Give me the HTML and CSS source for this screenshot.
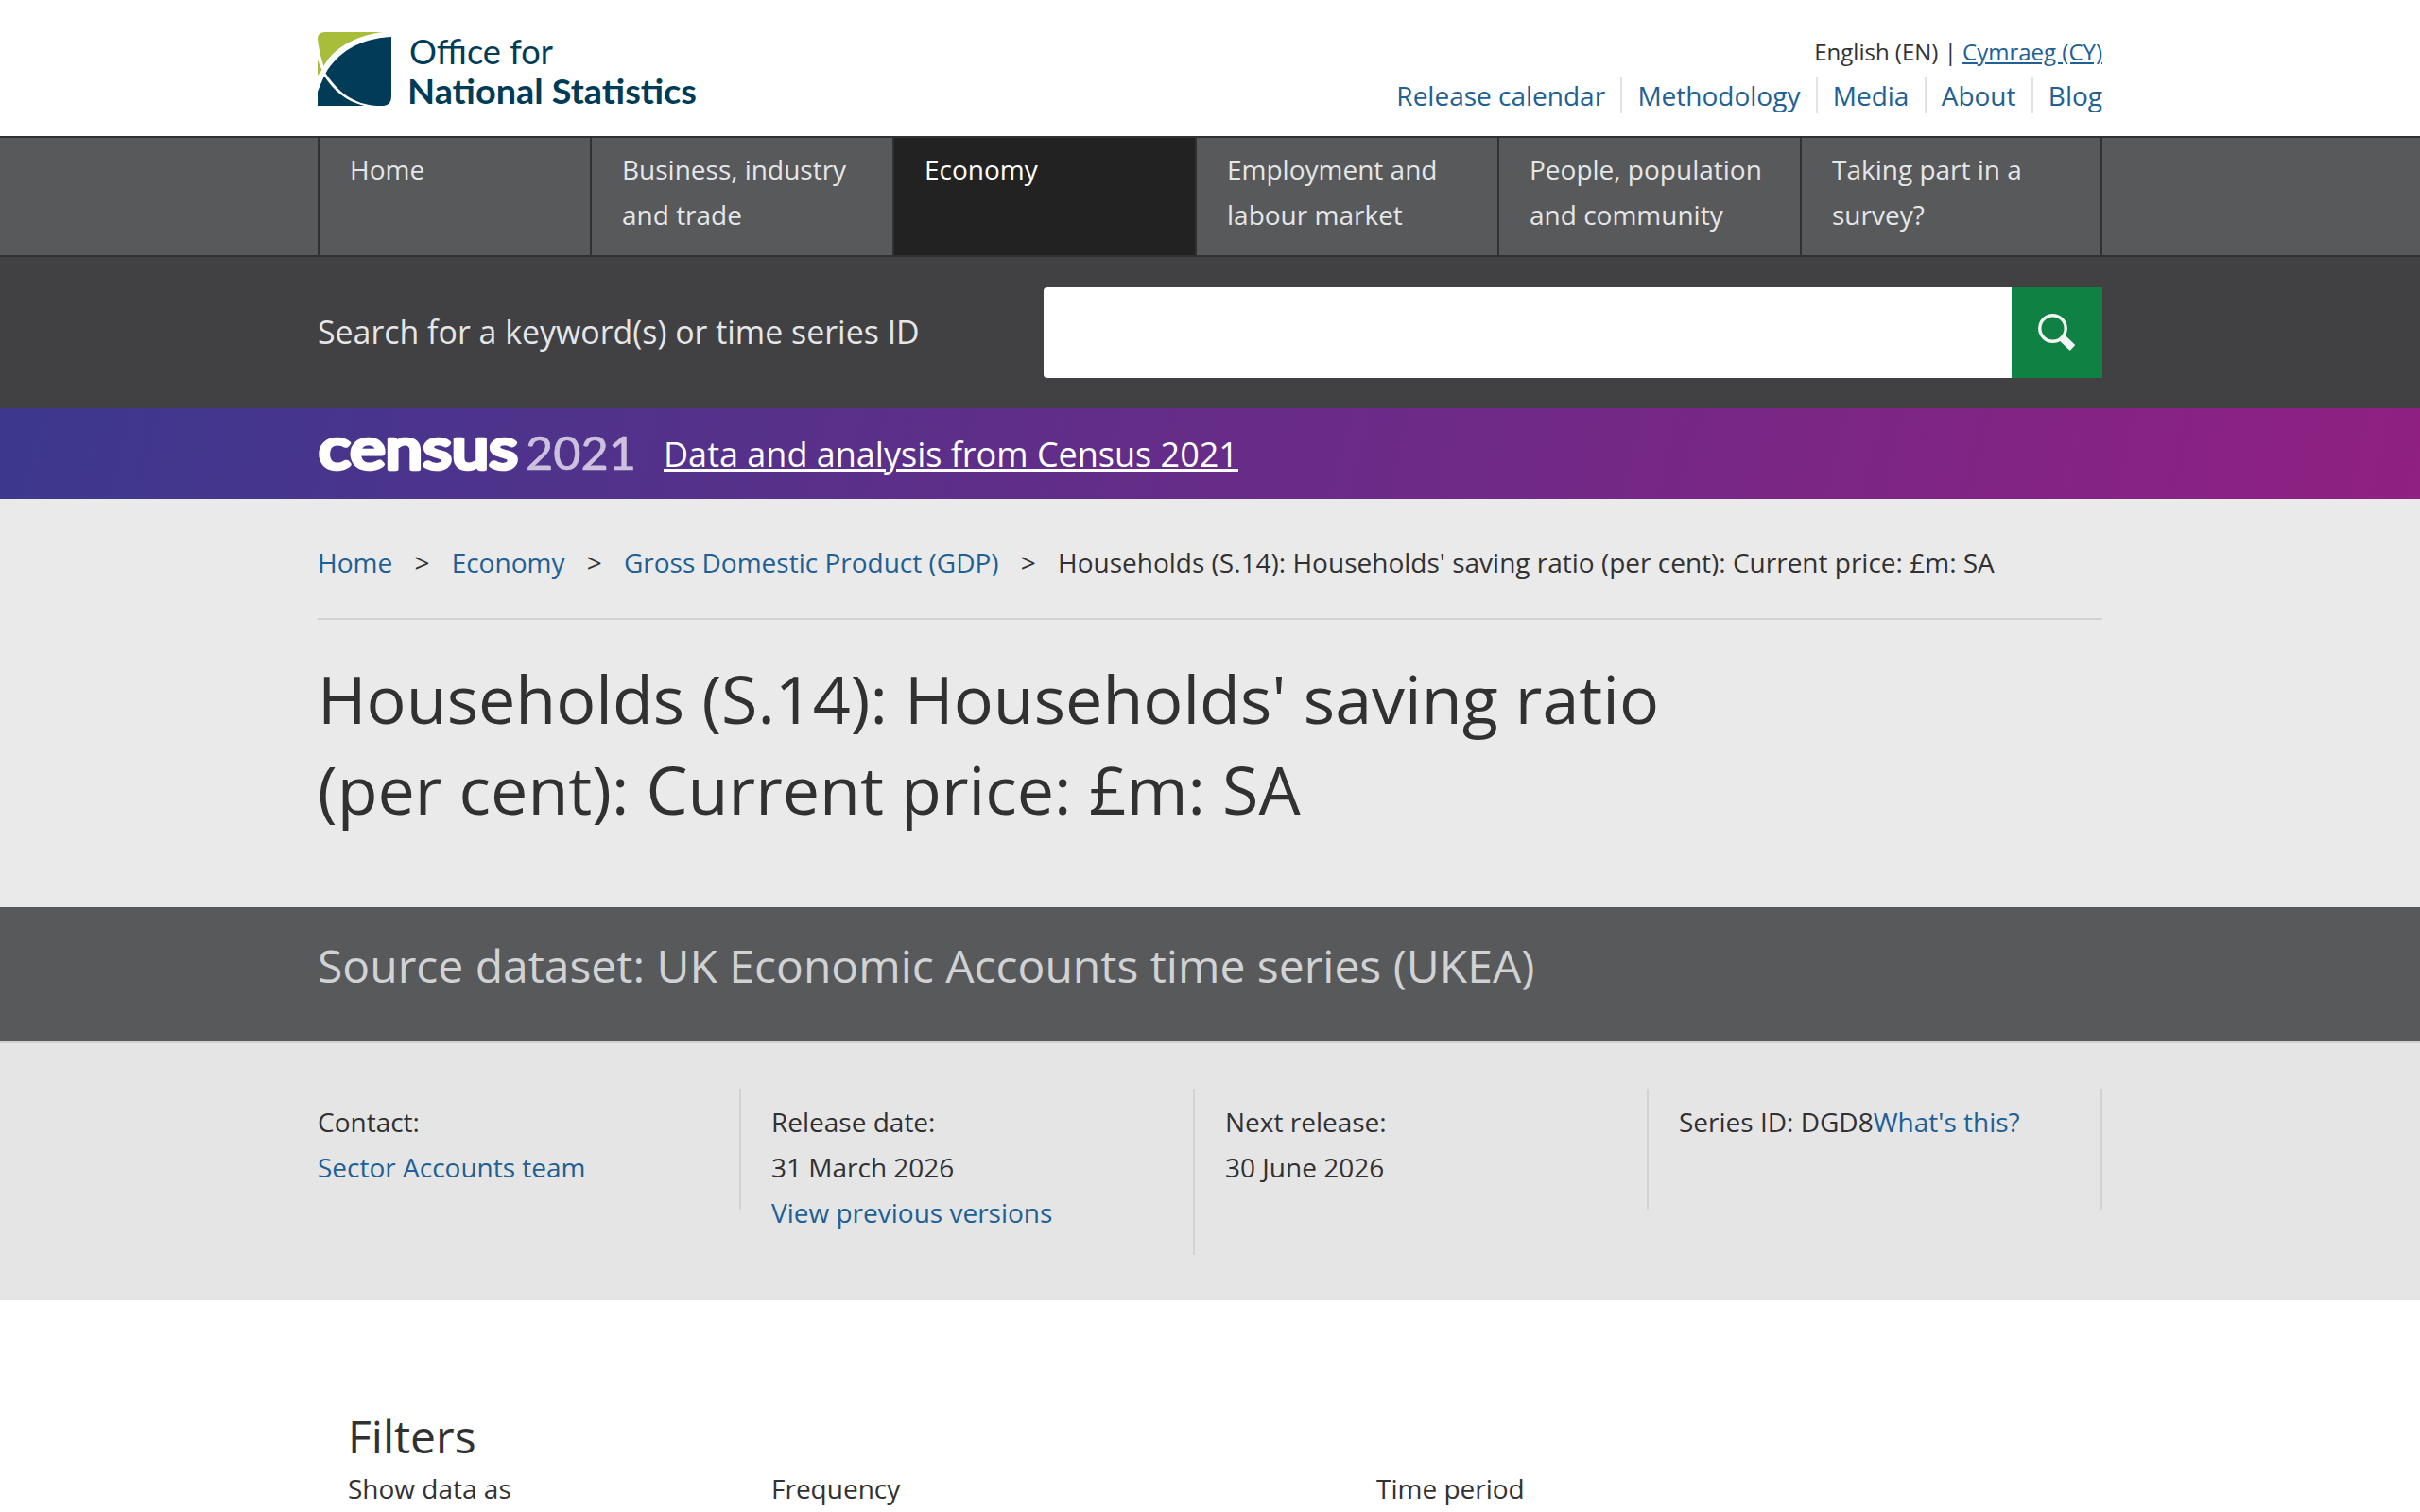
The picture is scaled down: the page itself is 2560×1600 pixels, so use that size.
FILE: index.html
```html
<!DOCTYPE html>
<html lang="en">
<head>
<meta charset="utf-8">
<title>Households' saving ratio - Office for National Statistics</title>
<link rel="stylesheet" href="styles.css">
</head>
<body>
<header class="top"><div class="wrap top-row">
<a href="#" class="logo"><svg width="420" height="96" viewBox="0 0 420 96" role="img" aria-label="Office for National Statistics">
<path fill="#a8bd3a" d="M0 7Q0 0 8 0H69C38 4 16 18 6.500 36Q1.500 22 0 7ZM0 29Q2 35 4.500 40L0 46Z"/>
<path fill="#003c57" d="M78 5C43 7 21 22 8.500 43.500C22 64 38 76 62 78H70Q78 77 78 68ZM0 63Q3 55 7 46.500C17 62 30 73 49 78H0Z"/>
<text class="logo-light" x="97" y="33.500" textLength="152" lengthAdjust="spacingAndGlyphs">Office for</text>
<text class="logo-bold" x="95" y="75.500" textLength="306" lengthAdjust="spacingAndGlyphs">National Statistics</text>
</svg></a>
<div class="top-links">
<div class="lang">English (EN) | <a href="#">Cymraeg (CY)</a></div>
<nav class="secondary"><a href="#">Release calendar</a><a href="#">Methodology</a><a href="#">Media</a><a href="#">About</a><a href="#">Blog</a></nav>
</div>
</div></header>
<nav class="primary"><div class="wrap primary-row">
<a href="#" class="home">Home</a><a href="#">Business, industry and trade</a><a href="#" class="active">Economy</a><a href="#">Employment and labour market</a><a href="#">People, population and community</a><a href="#" class="last">Taking part in a survey?</a>
</div></nav>
<form class="search"><div class="wrap search-row">
<label for="q">Search for a keyword(s) or time series ID</label>
<input id="q" type="search"><button type="button" aria-label="Search"><svg width="40" height="40" viewBox="0 0 40 40"><circle cx="15.500" cy="15.500" r="13.700" fill="none" stroke="#f4f4f4" stroke-width="3.400"/><path d="M25.500 25.500L36.500 36" stroke="#f4f4f4" stroke-width="8"/></svg></button>
</div></form>
<section class="census"><div class="wrap census-row">
<svg width="336" height="96" viewBox="0 -20 336 96" role="img" aria-label="Census 2021"><text class="census-name" x="1" y="44" textLength="211" lengthAdjust="spacingAndGlyphs">census</text><text class="census-year" x="220" y="45" textLength="117" lengthAdjust="spacingAndGlyphs">2021</text></svg>
<a href="#">Data and analysis from Census 2021</a>
</div></section>
<section class="intro"><div class="wrap">
<nav class="crumbs"><a href="#">Home</a><i>&gt;</i><a href="#">Economy</a><i>&gt;</i><a href="#">Gross Domestic Product (GDP)</a><i>&gt;</i><span>Households (S.14): Households' saving ratio (per cent): Current price: £m: SA</span></nav>
<h1>Households (S.14): Households' saving ratio (per cent): Current price: £m: SA</h1>
</div></section>
<section class="source"><div class="wrap"><h2>Source dataset: UK Economic Accounts time series (UKEA)</h2></div></section>
<section class="meta"><div class="wrap meta-row">
<div class="cell first">Contact:<a href="#">Sector Accounts team</a></div>
<div class="cell">Release date:<span>31 March 2026</span><a href="#">View previous versions</a></div>
<div class="cell">Next release:<span>30 June 2026</span></div>
<div class="cell inline">Series ID: DGD8<a href="#">What's this?</a></div>
</div></section>
<main class="wrap filters"><h2>Filters</h2>
<div class="filter-row"><span>Show data as</span><span>Frequency</span><span>Time period</span></div></main>
</body>
</html>
```
FILE: styles.css
```css
* { box-sizing: border-box; }
html, body { margin: 0; height: 1600px; overflow: hidden; }
body { background: #fff; color: #323132; font: 28px/48px "Open Sans", sans-serif; }
a { color: #206095; text-decoration: none; }
h1, h2 { margin: 0; font-weight: 400; }
.wrap { width: 1888px; margin: 0 auto; }
.top { height: 144px; }
.top-row { display: flex; justify-content: space-between; }
.logo { display: block; padding-top: 34px; height: 144px; }
.logo svg { display: block; overflow: visible; }
.logo-light, .logo-bold { fill: #003c57; font-family: Lato, sans-serif; font-size: 37px; }
.logo-bold { font-weight: 700; }
.top-links { padding-top: 32px; }
.lang { height: 50px; font-size: 24px; line-height: 46px; text-align: right; }
.lang a { text-decoration: underline; }
.secondary { display: flex; line-height: 38px; }
.secondary a { padding: 0 16.15px; border-left: 2px solid #e2e2e3; }
.secondary a:first-child { border: 0; }
.secondary a:last-child { padding-right: 0; }
.primary { height: 128px; background: #58595b; border-top: 2px solid #323132; border-bottom: 2px solid #323132; }
.primary-row { display: flex; height: 124px; }
.primary a { width: 320px; padding: 9px 30px 0 32px; color: #e5e6e7; border-left: 2px solid #323132; }
.primary a.home { width: 288px; }
.primary a.active { background: #222; color: #fff; }
.primary a.last { border-right: 2px solid #323132; padding-right: 60px; }
.search { height: 160px; background: #414042; padding-top: 32px; }
.search-row { display: flex; }
.search label { width: 768px; color: #e5e6e7; font-size: 33.9px; line-height: 95px; }
.search input { width: 1024px; height: 96px; border: 0; border-radius: 4px 0 0 4px; background: #fff; }
.search button { display: flex; width: 96px; height: 96px; padding: 0 0 0 28px; align-items: center; border: 0; background: #0f8243; }
.census { height: 96px; background: linear-gradient(104deg, #3c388e 0%, #902082 100%); }
.census-row { display: flex; height: 96px; align-items: center; }
.census-row svg { overflow: visible; }
.census-name { fill: #fff; stroke: #fff; stroke-width: 4.5px; stroke-linejoin: round; font: 400 60px Lato, sans-serif; }
.census-year { fill: #cdc2de; stroke: #cdc2de; stroke-width: .6px; stroke-linejoin: round; font: 400 48px Lato, sans-serif; }
.census a { margin-left: 30px; padding-top: 2px; color: #fff; font-size: 36px; text-decoration: underline; }
.intro { height: 432px; background: #eaeaea; }
.crumbs { display: flex; height: 128px; padding-top: 43px; border-bottom: 2px solid #d0d2d3; }
.crumbs i { width: 62.5px; font-style: normal; text-align: center; }
h1 { width: 1500px; padding-top: 35px; font-size: 70px; line-height: 96px; }
.source { height: 142px; background: #58595b; color: #d0d2d3; }
.source h2 { padding-top: 30px; font-size: 48px; line-height: 64px; }
.meta { height: 274px; background: #e5e5e5; border-top: 2px solid #d0d2d3; padding-top: 48px; }
.meta-row { display: flex; align-items: flex-start; }
.cell { display: flex; flex-direction: column; width: 480px; min-height: 128px; padding: 11px 0 21px 32px; border-right: 2px solid #d0d2d3; }
.cell.first { width: 448px; padding-left: 0; }
.cell.inline { flex-direction: row; }
.filters { padding: 112px 32px 0; }
.filters h2 { font-size: 48px; line-height: 63px; }
.filter-row { display: grid; grid-template-columns: 448px 640px 1fr; }
```
